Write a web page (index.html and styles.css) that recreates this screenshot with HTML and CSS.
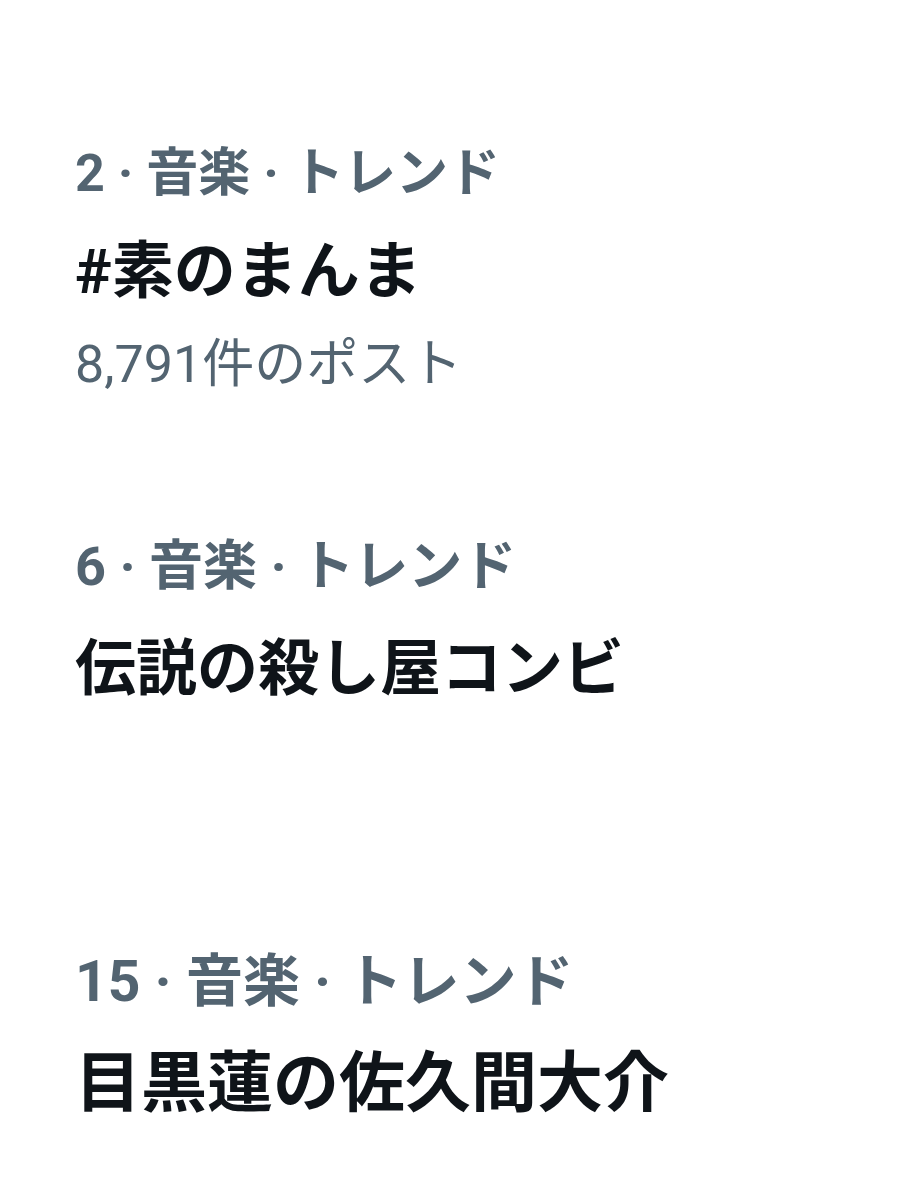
FILE: index.html
```html
<!DOCTYPE html>
<html lang="ja">
<head>
    <meta charset="UTF-8">
    <title>トレンド</title>
    <link rel="stylesheet" href="styles.css">
</head>
<body>
    <main class="trends">
        <div class="trend trend--first">
            <div class="trend-meta">2 · 音楽 · トレンド</div>
            <div class="trend-title">#素のまんま</div>
            <div class="trend-count">8,791件のポスト</div>
        </div>

        <div class="trend trend--second">
            <div class="trend-meta">6 · 音楽 · トレンド</div>
            <div class="trend-title">伝説の殺し屋コンビ</div>
        </div>

        <div class="trend trend--third">
            <div class="trend-meta">15 · 音楽 · トレンド</div>
            <div class="trend-title">目黒蓮の佐久間大介</div>
        </div>
    </main>
</body>
</html>
```

FILE: styles.css
```css
* { box-sizing: border-box; }
body {
    margin: 0;
    background: #fff;
    font-family: Roboto, "Noto Sans CJK JP", sans-serif;
    color: #0f1419;
}
.trends {
    display: flex;
    flex-direction: column;
    padding: 124px 0 0 75px;
}
.trend-meta {
    color: #536471;
    font-weight: 700;
    font-size: 52px;
    line-height: 100px;
    white-space: nowrap;
}
.trend-title {
    font-weight: 700;
    font-size: 62px;
    line-height: 96px;
    white-space: nowrap;
}
.trend-count {
    color: #536471;
    font-size: 52px;
    line-height: 90px;
    white-space: nowrap;
}

/* each trend was cropped at a slightly different zoom */
.trend--second { margin-top: 107px; }
.trend--second .trend-meta { font-size: 54px; }
.trend--second .trend-title { font-size: 61px; line-height: 104px; }

.trend--third { margin-top: 211px; }
.trend--third .trend-meta { font-size: 57px; }
.trend--third .trend-title { font-size: 66px; line-height: 104px; }
```
